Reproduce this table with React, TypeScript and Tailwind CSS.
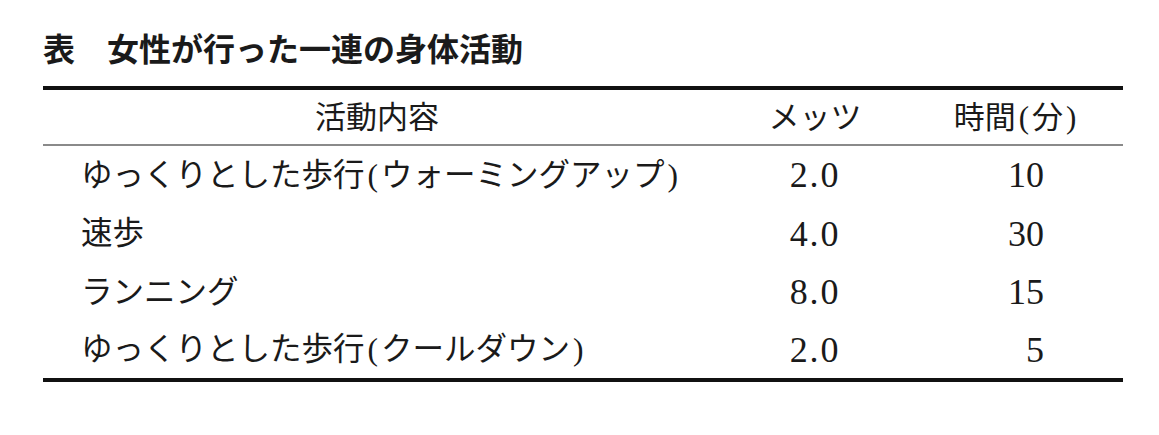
const rows = [
  { name: 'ゆっくりとした歩行(ウォーミングアップ)', mets: '2.0', min: '10' },
  { name: '速歩', mets: '4.0', min: '30' },
  { name: 'ランニング', mets: '8.0', min: '15' },
  { name: 'ゆっくりとした歩行(クールダウン)', mets: '2.0', min: '5' },
];

// the original typeface sets brackets a little wider than Times does
const Spaced = ({ text }: { text: string }) => (
  <>
    {text.split(/([()])/).map((part, i) =>
      part === '(' || part === ')' ? (
        <span key={i} className="px-[3px]">
          {part}
        </span>
      ) : (
        part
      )
    )}
  </>
);

const App = () => {
  return (
    <div className="min-h-screen bg-white px-[43px] pt-[31px] text-[#1a1a1a]">
      {/* Caption */}
      <h1 className="font-['Noto_Sans_CJK_JP',sans-serif] text-[32px] font-bold leading-none">
        表　女性が行った一連の身体活動
      </h1>

      {/* Table */}
      <div className="mt-[23px] w-[1080px] border-y-4 border-[#111] font-['Liberation_Serif','Noto_Sans_CJK_JP',serif]">
        <div className="grid h-[56px] grid-cols-[668px_208px_1fr] items-center border-b-2 border-[#8a8a8a] text-[31px] leading-none">
          <div className="text-center">活動内容</div>
          <div className="text-center">メッツ</div>
          <div className="pr-[9px] text-center">
            <Spaced text="時間(分)" />
          </div>
        </div>

        {rows.map((r, i) => (
          <div
            key={i}
            className={`grid grid-cols-[668px_208px_1fr] items-center leading-none ${
              i === rows.length - 1 ? 'h-[56px]' : 'h-[58.5px]'
            }`}
          >
            <div className="pl-[38px] text-[31.5px]">
              <Spaced text={r.name} />
            </div>
            <div className="text-center text-[36px] tracking-[0.05em]">{r.mets}</div>
            <div className="pr-[79px] text-right text-[36px]">{r.min}</div>
          </div>
        ))}
      </div>
    </div>
  );
};

export default App;
